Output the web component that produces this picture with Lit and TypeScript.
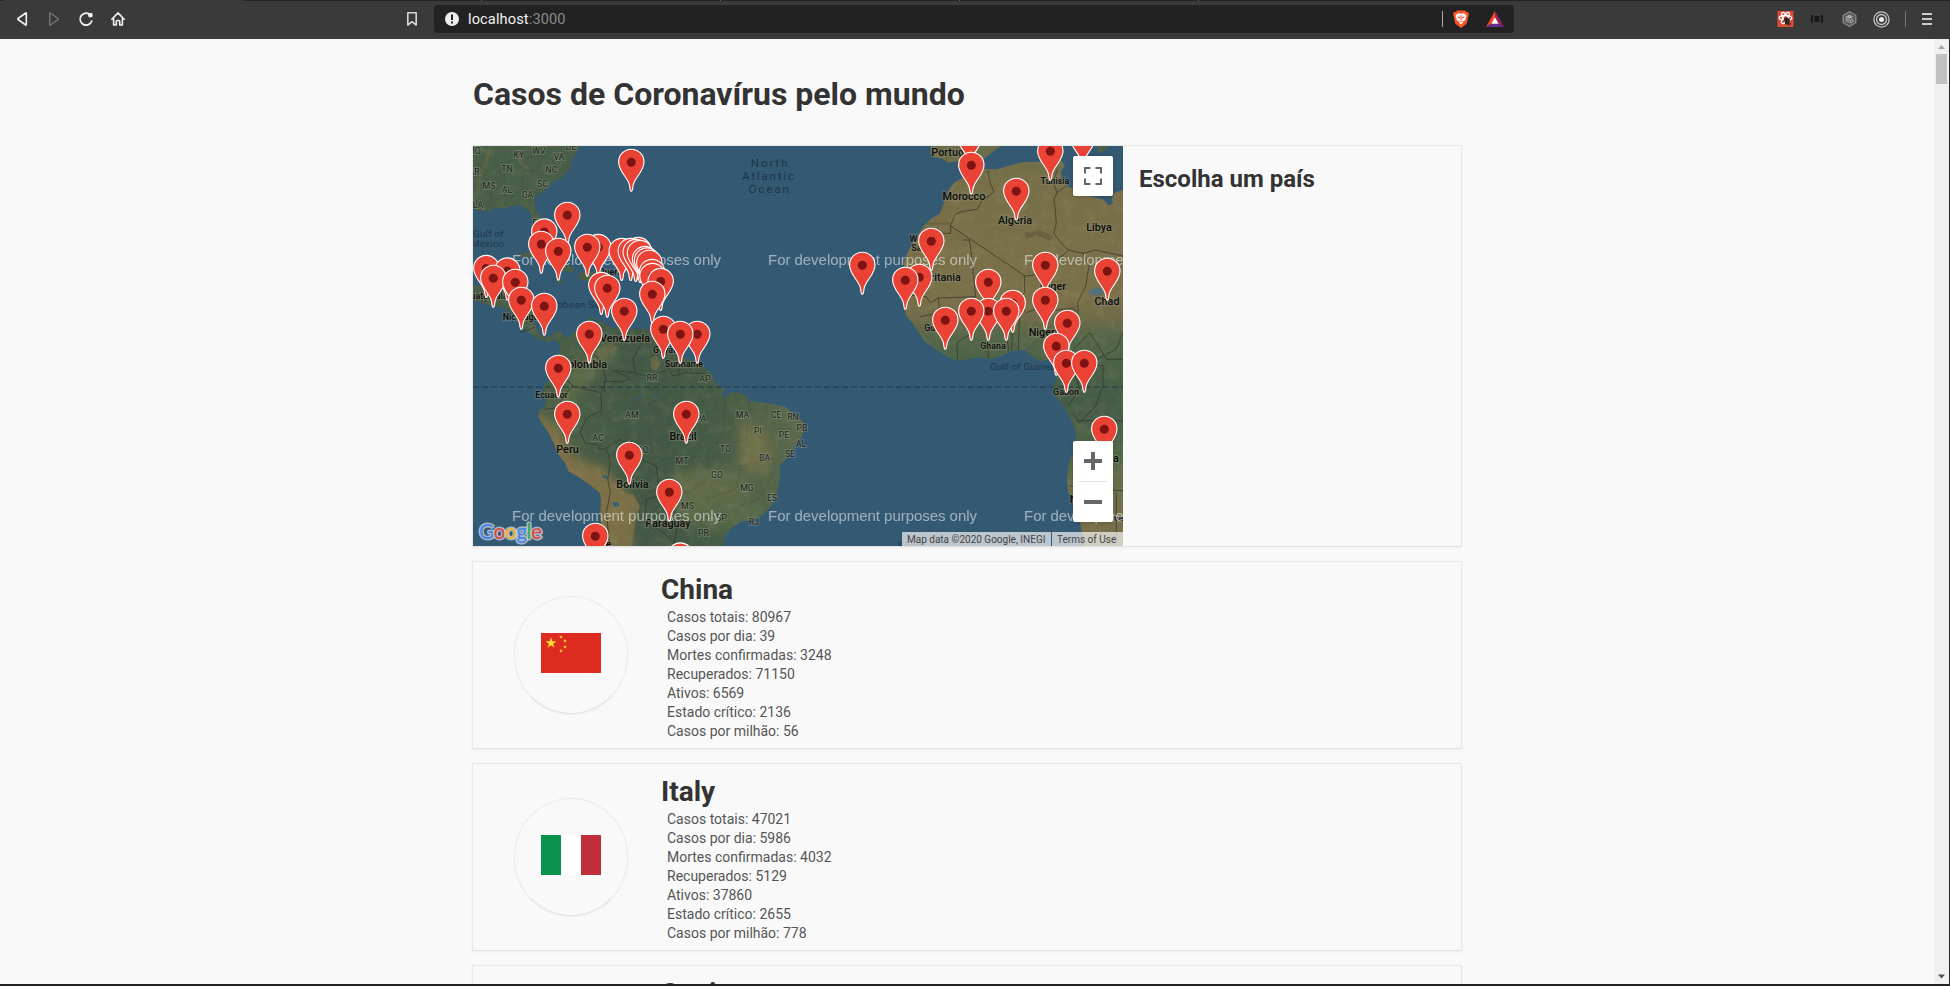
import { LitElement, html, svg, css } from "lit";
import { customElement, property } from "lit/decorators.js";

interface Country {
  name: string;
  flag: string;
  stats: [string, number][];
}

const country = (name: string, flag: string, n: number[]): Country => ({
  name,
  flag,
  stats: [
    ["Casos totais", n[0]],
    ["Casos por dia", n[1]],
    ["Mortes confirmadas", n[2]],
    ["Recuperados", n[3]],
    ["Ativos", n[4]],
    ["Estado crítico", n[5]],
    ["Casos por milhão", n[6]],
  ],
});

const COUNTRIES: Country[] = [
  country("China", "cn", [80967, 39, 3248, 71150, 6569, 2136, 56]),
  country("Italy", "it", [47021, 5986, 4032, 5129, 37860, 2655, 778]),
  country("Spain", "es", [21510, 3433, 1093, 1588, 18829, 939, 460]),
];

// Pin positions on the 650x400 map (centre of each pin's dot), back to front.
const PINS: [number, number][] = [
  [496.7, -9.3], [609.7, -8.3], [577.3, 5.3], [158.3, 16.3], [498.3, 19.3], [543.3, 45.3],
  [94.3, 69.3], [71.3, 86], [458.3, 95.3], [68.3, 98.3], [125.3, 101.5], [114.3, 101.3],
  [165.3, 104.5], [85.3, 105.3], [148.7, 105.5], [157.7, 105.5], [162.7, 106.5], [167, 107.5],
  [172, 113.5], [174, 115], [176.3, 117.3], [389.3, 119.3], [572.3, 119.3], [13.3, 122.5],
  [34.3, 125], [634.3, 125.3], [179, 126.5], [179.5, 130.5], [446.3, 131.3], [20.3, 132.3],
  [432.3, 134.3], [187.7, 135.5], [42.3, 136.3], [515.3, 136.3], [128.3, 139.5], [134.3, 142.3],
  [179.3, 148.3], [48.3, 154.3], [572.3, 154.3], [539.7, 157.3], [71.3, 160.3], [515.3, 165.3],
  [151.3, 165.3], [498.3, 165.3], [533.3, 165.3], [472.3, 174.3], [594.3, 177.3], [190.3, 183.3],
  [224.3, 188.3], [116.3, 188.3], [207.3, 188.3], [583.3, 200.3], [593.3, 217.3], [611.3, 217.3],
  [85.3, 222.3], [94.3, 268.3], [213.3, 268.3], [631.3, 283.3], [156.3, 309.3], [196.3, 346.3],
  [122.3, 390.3], [207.3, 410],
];

// Labels: text, centre x, baseline y, size.
const COUNTRY_LABELS: [string, number, number, number][] = [
  ["Portugal", 479, 10, 10.8], ["Morocco", 491, 54, 10.8], ["Tunisia", 582, 37.5, 8.9],
  ["Algeria", 542, 78, 10.8], ["Libya", 626, 85, 10.8], ["Western", 453, 95.5, 8.9],
  ["Sahara", 452, 104.5, 8.9], ["Mauritania", 462, 134.8, 10.8], ["Niger", 580, 143.8, 10.8],
  ["Chad", 634, 159, 10.8], ["Nigeria", 573, 190, 10.8], ["Guinea", 465, 184.5, 8.9],
  ["Ghana", 520, 202.5, 8.9], ["Gabon", 593, 248.5, 8.9], ["Angola", 629, 316, 10.8],
  ["Namibia", 617, 357, 10.8], ["Guatemala", 13, 152.5, 8.9], ["Nicaragua", 50, 173.5, 8.9],
  ["Puerto Rico", 149, 128.5, 8.9], ["Venezuela", 152, 196, 10.8], ["Colombia", 111, 222, 10.8],
  ["Guyana", 195, 206.5, 8.9], ["Suriname", 211, 220.5, 8.9], ["Ecuador", 78.5, 251.5, 8.9],
  ["Peru", 94.5, 306.5, 10.8], ["Brazil", 210, 293.5, 10.8], ["Bolivia", 159.5, 341.5, 10.8],
  ["Paraguay", 195, 380.5, 10.8], ["Chile", 126, 402, 10.8], ["Botswana", 640, 375, 9],
];

const STATE_LABELS: [string, number, number][] = [
  ["MO", 1, 8], ["KY", 46, 12], ["WV", 66, 7.5], ["VA", 86, 14], ["DE", 98, 4], ["AR", 1, 29],
  ["TN", 34, 26], ["NC", 78.5, 27], ["MS", 16, 43], ["AL", 34, 47], ["SC", 69.5, 41],
  ["GA", 54.5, 52], ["LA", 5, 62], ["FL", 64, 80], ["RR", 179, 235], ["AP", 232, 236],
  ["AM", 159, 272], ["PA", 228, 276], ["MA", 269.5, 272], ["CE", 303, 272], ["RN", 320, 274],
  ["PI", 285, 288], ["PB", 329, 285], ["PE", 311, 292], ["AL", 328, 301], ["SE", 317, 311],
  ["AC", 125, 295], ["RO", 170, 307], ["TO", 252.5, 306], ["BA", 291.5, 315], ["MT", 209, 318],
  ["GO", 244, 332], ["MG", 274, 345], ["ES", 299, 355], ["MS", 214.5, 363], ["SP", 248.5, 375],
  ["RJ", 281, 379], ["PR", 230.5, 390],
];

// Continent outlines, in thirds of a map pixel.
const N_AMERICA = "M0 0H318L308 22 296 44 292 66 276 82 268 96 250 104 236 112 226 126 212 134 200 142 188 150 184 164 186 180 196 200 207 222 214 246 206 262 196 258 186 236 178 226 176 208 164 190 148 186 136 176 120 182 106 180 100 190 84 186 62 186 50 198 34 194 18 196 0 186Z";
const C_AMERICA = "M0 418L36 420 60 438 96 432 130 440 160 440 178 446 184 470 180 506 186 534 196 560 214 574 232 570 250 556 268 562 280 580 284 602 266 612 256 590 240 578 230 590 218 586 198 582 180 568 160 556 146 540 128 524 116 500 90 486 60 480 24 470 0 460Z";
const S_AMERICA = "M266 600L284 572 310 556 336 528 358 512 364 520 352 536 366 536 378 524 392 528 410 544 470 548 520 548 545 560 572 590 600 622 640 640 680 652 714 680 724 706 738 720 756 730 744 744 752 754 776 738 800 740 818 750 828 766 856 768 900 774 936 782 968 806 988 824 994 846 986 872 974 892 956 916 940 938 920 960 920 1000 912 1040 902 1066 890 1086 868 1108 838 1122 806 1126 776 1146 756 1170 750 1200H388L384 1140 382 1100 384 1060 380 1040 350 1016 318 994 286 976 276 950 256 924 246 900 230 866 208 834 196 812 198 792 214 786 218 766 210 744 214 716 232 700 244 664 254 634Z";
const AFRICA = "M1506 57L1494 76 1476 92 1446 108 1424 136 1414 168 1400 204 1374 218 1354 238 1338 262 1320 290 1304 320 1292 350 1296 386 1304 420 1300 452 1294 484 1298 508 1318 530 1334 556 1356 588 1392 612 1426 634 1454 645 1486 640 1514 634 1546 640 1588 630 1612 616 1656 612 1680 634 1700 646 1726 642 1744 652 1752 684 1740 730 1754 758 1776 790 1796 826 1810 866 1804 912 1788 950 1782 1000 1784 1036 1808 1072 1820 1120 1832 1200H1950V132L1924 140 1916 160 1920 172 1908 178 1890 160 1856 152 1830 140 1806 132 1784 120 1766 100 1764 76 1776 58 1764 44 1730 42 1690 48 1650 48 1612 58 1572 70 1530 68Z";
const IBERIA = "M1374 0L1372 20 1380 34 1408 38 1426 50 1452 46 1490 46 1530 40 1556 20 1584 0Z";
const ISLANDS = "M126 330L160 318 196 316 240 334 282 356 304 368 300 378 262 376 236 352 192 334 150 334ZM250 404L272 406 274 411 256 412ZM316 384L348 374 384 378 412 390 398 398 360 398 330 404 316 398ZM424 396H446L444 404H426ZM1868 0L1880 20 1898 14 1906 0ZM290 220H294V226H290ZM1295 218H1300V222H1295ZM1312 222H1318V226H1312ZM1340 216H1345V224H1340Z";

const map = svg`
  <svg class="geo" viewBox="0 0 1950 1200" width="650" height="400">
    <defs>
      <linearGradient id="africa" x1="0" y1="0" x2="0" y2="1200" gradientUnits="userSpaceOnUse">
        <stop offset="0" stop-color="#686b48"/><stop offset=".08" stop-color="#776f49"/>
        <stop offset=".38" stop-color="#7a7049"/><stop offset=".43" stop-color="#706b49"/>
        <stop offset=".47" stop-color="#586748"/><stop offset=".54" stop-color="#4b6248"/>
        <stop offset=".64" stop-color="#455b46"/><stop offset=".77" stop-color="#526748"/>
        <stop offset=".88" stop-color="#71704b"/><stop offset="1" stop-color="#7b6e48"/>
      </linearGradient>
      <linearGradient id="america" x1="280" y1="0" x2="1000" y2="0" gradientUnits="userSpaceOnUse">
        <stop offset="0" stop-color="#4a5f46"/><stop offset=".3" stop-color="#435845"/>
        <stop offset=".62" stop-color="#465b45"/><stop offset="1" stop-color="#5d6b4b"/>
      </linearGradient>
      <clipPath id="sa"><path d=${S_AMERICA}/></clipPath>
      <clipPath id="land"><path d=${N_AMERICA + C_AMERICA + S_AMERICA + AFRICA + IBERIA + ISLANDS}/></clipPath>
      <filter id="soft" x="-20%" y="-20%" width="140%" height="140%"><feGaussianBlur stdDeviation="14"/></filter>
      <filter id="terrain" x="0" y="0" width="100%" height="100%">
        <feTurbulence type="fractalNoise" baseFrequency=".03" numOctaves="4" seed="8"/>
        <feColorMatrix values="0 0 0 0 .52  0 0 0 0 .47  0 0 0 0 .28  2 0 0 0 -.9"/>
      </filter>
    </defs>
    <rect width="1950" height="1200" fill="#345973"/>
    <path d=${N_AMERICA + C_AMERICA + ISLANDS} fill="#495e47"/>
    <path d=${S_AMERICA} fill="url(#america)"/>
    <path d=${AFRICA + IBERIA} fill="url(#africa)"/>
    <g clip-path="url(#sa)">
      <g filter="url(#soft)">
        <path d="M190 790L262 850 300 930 400 970 440 1020 480 1060 470 1200H360L370 1060 270 990 190 830Z" fill="#7d7046"/>
        <path d="M290 690L330 640 400 600 440 620 380 670 320 740 270 800 250 780Z" fill="#5b6a49"/>
        <path d="M600 980L760 960 840 1000 800 1100 640 1140 600 1080Z" fill="#5f6b49"/>
        <path d="M800 820L880 850 900 940 860 990 800 960Z" fill="#70704a"/>
        <path d="M680 1080L860 1060 850 1130 700 1160Z" fill="#566a4a"/>
      </g>
      <path d="M384 1020L420 1010 460 1042 482 1046 500 1080 486 1130 476 1200H388Z" fill="#7d7046" opacity=".8"/>
      <path d="M368 610L420 590 432 610 380 640ZM530 640L548 628 562 650 552 676 536 670Z" fill="#6c6c47" opacity=".7"/>
      <path d="M418 1070L436 1068 440 1080 424 1084ZM386 986L404 990 402 998 390 996ZM520 754L560 744 562 748ZM470 764L510 748 512 752Z" fill="#34607a"/>
    </g>
    <g clip-path="url(#land)"><rect width="1950" height="1200" filter="url(#terrain)" opacity=".14"/></g>
    <path d="M0 0L46 20 36 60 20 90 14 140M130 20L150 60 170 70" fill="none" stroke="#7b7044" stroke-width="12" opacity=".3"/>
    <path d="M1655 260L1700 252 1740 270 1730 284 1690 268 1660 278ZM1360 230H1430V236H1362Z" fill="#5b573d" opacity=".55"/>
    <path d="M1842 440L1866 424 1896 430 1888 446 1860 448Z" fill="#54707a"/>
    <g class="border">
      <path d="M1544 74L1552 112 1562 136 1548 150 1530 160 1512 190 1470 196 1448 204 1433 236V262H1370M1433 240L1636 376 1656 390 1696 386 1746 350 1786 312 1764 290 1742 262 1750 232 1746 180 1742 162 1752 140 1742 110 1752 72M1752 140L1780 120M1786 312L1830 322 1866 312 1950 330M1830 322L1848 360 1838 420 1814 470 1816 500 1800 486 1740 494 1700 486 1660 500 1640 480M1468 282H1490L1508 452 1396 456 1372 470 1360 452 1300 446M1655 390V440L1636 460 1574 470 1540 490 1510 500 1490 520 1500 560 1452 590 1454 640M1396 456L1400 500 1340 512M1546 520V636M1600 500L1606 616M1620 490L1616 612M1640 480L1636 612M1756 660L1812 600 1850 560 1870 590 1900 640 1950 640M1740 668H1800L1820 730 1786 780M1800 660L1890 658 1890 720 1868 780 1820 830 1800 800M1810 824H1950M1790 1020L1860 1030 1950 1034M1930 1040V1200M1870 640L1930 610 1950 560M1500 452L1504 504"/>
      <path d="M318 560L332 600 380 640 400 700 384 740M214 790L250 786 280 740 300 720 384 740M300 720L280 700 246 680M384 740L386 794 340 816 322 860 336 890 376 898 380 910 400 906 412 950 404 1000 412 1040 400 1100 410 1200M400 906L440 880 480 900 500 940 550 960 554 1000 556 1046M420 674L460 690 470 700 450 706 394 706 394 740M426 674L480 680 520 690 580 674M520 570L500 600 480 640 486 680M570 590L580 660 600 690 640 680 700 684M620 630L616 680M650 650L656 686M520 1060L560 1050 590 1080 620 1120 600 1200M520 1060L516 1120 596 1180M110 440L116 480M24 434L40 470M100 500L170 506M140 560L186 544"/>
      <path class="fine" d="M0 90L160 74 270 76M0 44L40 76 120 40 200 30 290 60M60 88L50 180M96 84L100 184M144 80L156 156 184 156M150 150H112M184 156L212 130M150 84L212 132M556 700L560 760 480 790M640 690L690 760 680 860 560 900M760 740L750 860 700 930 560 940M830 770L820 880 750 900M880 780L880 850 820 880M900 850H980M930 880L900 940 800 960M700 930L720 990 640 1040 580 1040M800 960L790 1030 700 1060M900 980L860 1060 800 1080M640 1130L720 1110 780 1130"/>
    </g>
    <path d="M0 723H1950" stroke="#2b3b45" stroke-width="4.5" stroke-dasharray="18 9" opacity=".75"/>
  </svg>`;

const pin = ([x, y]: [number, number]) => svg`
  <g transform="translate(${x} ${y})">
    <path d="M0 29C-1.4 29-1.3 25.5-1.9 22.5C-3.6 15-12.7 9-12.7-.4A12.7 12.7 0 0 1 12.7-.4C12.7 9 3.6 15 1.9 22.5C1.3 25.5 1.4 29 0 29Z" fill="#ea4335" stroke="#fff" stroke-width="1.1"/>
    <circle r="4.5" fill="#7e1411"/>
  </g>`;

@customElement("case-map")
class CaseMap extends LitElement {
  static styles = css`
    :host { display: block; position: relative; width: 650px; height: 400px; overflow: hidden; font-family: Roboto, sans-serif; }
    svg { display: block; }
    .layer, .controls, .legal { position: absolute; }
    .layer { left: 0; top: 0; }
    .border path { fill: none; stroke: #34382e; stroke-width: 3; opacity: .75; stroke-linejoin: round; }
    .border .fine { stroke-width: 2; stroke-dasharray: 6 4; opacity: .45; }
    .country { font-weight: 500; fill: #0b0d0b; text-anchor: middle; paint-order: stroke; stroke: rgba(150, 150, 130, .34); stroke-width: 2.4px; }
    .state { font-size: 8.8px; fill: #1c231d; text-anchor: middle; paint-order: stroke; stroke: rgba(150, 160, 140, .42); stroke-width: 2px; }
    .ocean { font-size: 11.8px; letter-spacing: 1.7px; fill: #1f3546; text-anchor: middle; }
    .sea { font-size: 9.9px; fill: #1f384b; letter-spacing: .2px; }
    .mark { font-family: "Liberation Sans", sans-serif; font-size: 15px; fill: #fff; opacity: .52; }
    .logo { font-family: Lato, sans-serif; font-weight: 500; font-size: 21px; paint-order: stroke; stroke: rgba(205, 216, 226, .75); stroke-width: 3px; stroke-linejoin: round; }
    .controls { right: 10px; top: 10px; height: 366px; display: flex; flex-direction: column; justify-content: space-between; }
    .button { width: 40px; background: #fff; border-radius: 2px; box-shadow: 0 1px 4px -1px rgba(0, 0, 0, .3); }
    .legal { right: 0; bottom: 0; height: 14px; display: flex; gap: 1px; font-size: 10px; line-height: 15px; color: #444; white-space: nowrap; }
    .legal span { background: rgba(245, 245, 245, .7); padding: 0 5.5px; }
    .legal .data { width: 138px; }
    .legal .terms { width: 60.5px; }
  `;
  render() {
    return html`
      ${map}
      <svg class="layer" viewBox="0 0 650 400" width="650" height="400">
        <text class="ocean" x="297" y="21">North</text>
        <text class="ocean" x="295.800" y="34">Atlantic</text>
        <text class="ocean" x="296.500" y="47">Ocean</text>
        <text class="sea" x="0" y="90.500">Gulf of</text>
        <text class="sea" x="-2" y="100.500">Mexico</text>
        <text class="sea" x="66" y="161.500">Caribbean Sea</text>
        <text class="sea" x="517" y="223.500">Gulf of Guinea</text>
        <text class="sea" x="425" y="403">South</text>
        ${STATE_LABELS.map(([t, x, y]) => svg`<text class="state" x=${x} y=${y}>${t}</text>`)}
        ${COUNTRY_LABELS.map(([t, x, y, s]) => svg`<text class="country" x=${x} y=${y} font-size=${s}>${t}</text>`)}
        ${[118.5, 374.5].map((y) => [39, 295, 551].map((x) => svg`
          <text class="mark" x=${x} y=${y} textLength="209">For development purposes only</text>`))}
        ${PINS.map(pin)}
        <text class="logo" x="6" y="392.500" textLength="63"><tspan fill="#4a86e8">G</tspan><tspan fill="#e2483d">o</tspan><tspan fill="#f0b429">o</tspan><tspan fill="#4a86e8">g</tspan><tspan fill="#3ca55c">l</tspan><tspan fill="#e2483d">e</tspan></text>
      </svg>
      <div class="controls">
        <div class="button">
          <svg viewBox="0 0 40 40" width="40" height="40"><path d="M12 17.500V12h5.500M22.500 12H28v5.500M28 22.500V28h-5.500M17.500 28H12v-5.500" fill="none" stroke="#666" stroke-width="2"/></svg>
        </div>
        <div class="button">
          <svg viewBox="0 0 40 81" width="40" height="81"><path d="M11 20h18M20 11v18M11 61h18" stroke="#666" stroke-width="4"/><path d="M5 40.500h30" stroke="#e6e6e6"/></svg>
        </div>
      </div>
      <div class="legal"><span class="data">Map data ©2020 Google, INEGI</span><span class="terms">Terms of Use</span></div>
    `;
  }
}

const star = (cx: number, cy: number, r: number) => {
  const pts = Array.from({ length: 10 }, (_, i) => {
    const a = (Math.PI / 5) * i - Math.PI / 2;
    const d = i % 2 ? r * 0.39 : r;
    return `${(cx + Math.cos(a) * d).toFixed(2)},${(cy + Math.sin(a) * d).toFixed(2)}`;
  });
  return svg`<polygon points=${pts.join(" ")} fill="#ffde31"/>`;
};

const FLAGS: Record<string, unknown> = {
  cn: svg`<rect width="60" height="40" fill="#de2b1f"/>${star(10, 10, 5.8)}${star(20, 4, 2)}${star(24, 8, 2)}${star(24, 14, 2)}${star(20, 18, 2)}`,
  it: svg`<rect width="60" height="40" fill="#fff"/><rect width="20" height="40" fill="#0b924c"/><rect x="40" width="20" height="40" fill="#c12f3b"/>`,
  es: svg`<rect width="60" height="40" fill="#c60b1e"/><rect y="10" width="60" height="20" fill="#ffc400"/>`,
};

@customElement("country-card")
class CountryCard extends LitElement {
  @property({ attribute: false }) country!: Country;
  static styles = css`
    :host { display: flex; box-sizing: border-box; height: 188px; flex: none; padding: 11px 0 0 41px; border: 1px solid #e8e8e8; border-bottom-color: #e2e2e2; box-shadow: 0 1px 3px rgba(0, 0, 0, .05); }
    .badge { box-sizing: border-box; width: 114px; height: 118px; margin-top: 23px; padding: 36px 26px 0; border: 1px solid #ebebeb; border-bottom-color: #e2e2e2; border-radius: 50%; box-shadow: 0 1px 2px rgba(0, 0, 0, .05); }
    .badge svg { display: block; }
    .info { margin-left: 33px; }
    h2 { margin: 0 0 2px; font-size: 28px; line-height: 33px; color: #333; }
    ul { list-style: none; margin: 0; padding: 0 0 0 6px; font-size: 14px; line-height: 19px; color: #555; }
  `;
  render() {
    const c = this.country;
    return html`
      <div class="badge"><svg viewBox="0 0 60 40" width="60" height="40">${FLAGS[c.flag]}</svg></div>
      <div class="info">
        <h2>${c.name}</h2>
        <ul>${c.stats.map(([k, v]) => html`<li>${k}: ${v}</li>`)}</ul>
      </div>
    `;
  }
}

@customElement("browser-bar")
class BrowserBar extends LitElement {
  static styles = css`
    :host { display: flex; flex-direction: column; height: 39px; background: #3a3a3a; box-sizing: border-box; }
    .tabs { display: flex; height: 1px; background: #232323; }
    .tab { width: 239px; margin-left: 4px; background: #3a3a3a; }
    .cut { width: 1px; margin-left: 238px; background: #666; }
    .row { display: flex; align-items: center; height: 36px; }
    svg { display: block; flex: none; }
    .nav { display: flex; gap: 16px; margin-left: 14px; width: 389px; }
    .url { display: flex; align-items: center; box-sizing: border-box; width: 1080px; height: 28px; margin-left: 13px; padding: 0 10px 0 11px; border-radius: 4px; background: #222; font: 14.6px/28px Roboto, sans-serif; letter-spacing: .12px; color: #f2f2f2; }
    .url .text { flex: 1; margin-left: 9px; }
    .port { color: #8b8b8b; }
    .rule { width: 1px; height: 16px; background: #aaa; }
    .url .rule { margin-right: 10px; }
    .url .rewards { margin-left: 17px; }
    .ext { display: flex; align-items: center; gap: 14px; margin-left: 263px; }
    .ext .rule { margin: 0 1px; background: #777; }
  `;
  render() {
    return html`
      <div class="tabs"><div class="tab"></div>${[0, 1, 2, 3].map(() => html`<div class="cut"></div>`)}</div>
      <div class="row">
        <div class="nav">
          <svg width="16" height="16" viewBox="0 0 16 16" fill="none" stroke="#f0f0f0" stroke-width="1.6" stroke-linejoin="round"><path d="M12.300 2.200v11.600Q12.300 14.300 11.700 14L4 8.500Q3.500 8 4 7.500L11.700 2Q12.300 1.700 12.300 2.200Z"/></svg>
          <svg width="16" height="16" viewBox="0 0 16 16" fill="none" stroke="#757575" stroke-width="1.5" stroke-linejoin="round"><path d="M3.700 2.200v11.600Q3.700 14.300 4.300 14L12 8.500Q12.500 8 12 7.500L4.300 2Q3.700 1.700 3.700 2.200Z"/></svg>
          <svg width="16" height="16" viewBox="0 0 16 16" fill="none" stroke="#f0f0f0" stroke-width="1.7" stroke-linecap="round"><path d="M13.800 10A6 6 0 1 1 11.500 3.200"/><path d="M9.700 2.300H14.400V6.600Z" fill="#f0f0f0" stroke="none"/><circle cx="12.200" cy="4.200" r="2.200" fill="#f0f0f0" stroke="none"/></svg>
          <svg width="16" height="16" viewBox="0 0 16 16" fill="none" stroke="#f0f0f0" stroke-width="1.6" stroke-linejoin="round" stroke-linecap="round"><path d="M1.800 8.200L8 1.900 14.200 8.200M3.600 7.300V14H6.300V10.300Q6.300 9.500 7 9.500H9Q9.700 9.500 9.700 10.300V14H12.400V7.300"/></svg>
        </div>
        <svg width="18" height="16" viewBox="0 0 18 16" fill="none" stroke="#d8d8d8" stroke-width="1.6" stroke-linejoin="round"><path d="M4.800 1.800H13.200V14L9 10.700 4.800 14Z"/></svg>
        <div class="url">
          <svg width="14" height="14" viewBox="0 0 14 14"><circle cx="7" cy="7" r="7" fill="#eee"/><path d="M7 2.600V8M7 9.600V11.400" stroke="#222" stroke-width="2"/></svg>
          <span class="text">localhost<span class="port">:3000</span></span>
          <div class="rule"></div>
          <svg width="16" height="18" viewBox="0 0 16 18"><path d="M4 .4H12L13.400 2 15 1.900 16 4.300 15.300 6 14 12.500Q13.600 14 12 15L8 17.900 4 15Q2.400 14 2 12.500L.7 6 0 4.300 1 1.900 2.600 2Z" fill="#fb542b"/><path d="M5.400 3.300 8 3.800 10.600 3.300 12 4 13.700 6 12.400 8.300 12.600 9.800 10 11.600 9.800 12.500 8 14.700 6.200 12.500 6 11.600 3.400 9.800 3.600 8.300 2.300 6 4 4Z" fill="#fff"/><path d="M4.400 6.300 7 7 6.800 8.600 5.500 8.200ZM11.600 6.300 9 7 9.200 8.600 10.500 8.200ZM7.500 5H8.500V10H7.500ZM5.800 10.300 8 11.300 10.200 10.300 8 12.400Z" fill="#fb542b"/></svg>
          <svg class="rewards" width="18" height="16" viewBox="0 0 18 16"><path d="M9 0 0 16 5.600 12.600 9 6.700Z" fill="#ff4724"/><path d="M9 0 18 16 12.400 12.600 9 6.700Z" fill="#9e1f63"/><path d="M0 16H18L12.400 12.600H5.600Z" fill="#662d91"/><path d="M9 6.200 12.600 12.700H5.400Z" fill="#fff"/></svg>
        </div>
        <div class="ext">
          <svg width="17" height="16" viewBox="0 0 17 16"><rect x=".5" width="16" height="16" fill="#dd4b39"/><g fill="none" stroke="#fff" stroke-width="1.300"><ellipse cx="8.500" cy="7" rx="6.300" ry="2.500"/><ellipse cx="8.500" cy="7" rx="6.300" ry="2.500" transform="rotate(60 8.500 7)"/><ellipse cx="8.500" cy="7" rx="6.300" ry="2.500" transform="rotate(120 8.500 7)"/></g><path d="M7 7 11 6.500 13 9 12.600 13.500 9 13.800 7.500 11Z" fill="#33221f"/><path d="M6 10 9 8M8 13 12 9M11 14.500 14 12.500" stroke="#33221f"/></svg>
          <svg width="18" height="16" viewBox="0 0 18 16" fill="none" stroke="#0c0c0c" stroke-width="1.400"><path d="M5.200 4.700H4.700Q4 4.700 4 5.700V7Q4 8 3 8 4 8 4 9V10.300Q4 11.300 4.700 11.300H5.200M12.800 4.700H13.300Q14 4.700 14 5.700V7Q14 8 15 8 14 8 14 9V10.300Q14 11.300 13.300 11.300H12.800M6.600 6H11.400M6.600 8H11.400M6.600 10H11.400"/></svg>
          <svg width="18" height="16" viewBox="0 0 18 16"><path d="M9.500 .7 15.800 4.300V11.700L9.500 15.300 3.200 11.700V4.300Z" fill="#555" stroke="#8c8c8c" stroke-width="1.300"/><path d="M9.500 3.400 13.500 5.700 9.500 8 5.500 5.700Z" fill="#aaa"/><path d="M5.500 5.700 9.500 8V12.600L5.500 10.300Z" fill="#8f8f8f"/><path d="M13.300 7.700 10.500 9V12L13.300 10.500V9.400H11.900" fill="none" stroke="#aaa"/></svg>
          <svg width="18" height="17" viewBox="0 0 18 17" fill="none" stroke="#c4c4c4" stroke-width="1.300"><circle cx="9.500" cy="8.500" r="7.600"/><circle cx="9.500" cy="8.500" r="5"/><circle cx="9.500" cy="8.500" r="2.500" fill="#eee" stroke="none"/></svg>
          <div class="rule"></div>
          <svg width="14" height="16" viewBox="0 0 14 16"><path d="M1 3H11M1 8H11M1 13H11" stroke="#ccc" stroke-width="2"/></svg>
        </div>
      </div>
    `;
  }
}

@customElement("app-root")
class AppRoot extends LitElement {
  static styles = css`
    :host { display: flex; flex-direction: column; box-sizing: border-box; width: 1950px; height: 986px; overflow: hidden; border-bottom: 2px solid #222; background: #f9f9f9; font-family: Roboto, sans-serif; color: #333; }
    .view { display: flex; flex: 1; min-height: 0; border-right: 1px solid #222; }
    .page { display: flex; justify-content: center; flex: 1; overflow: hidden; }
    main { display: flex; flex-direction: column; gap: 14px; width: 990px; }
    h1 { flex: none; margin: 36px 0 18px; padding-left: 1px; font-size: 32px; line-height: 38px; }
    .panel { display: flex; flex: none; box-sizing: border-box; height: 402px; border: 1px solid #e8e8e8; border-bottom-color: #e2e2e2; box-shadow: 0 1px 3px rgba(0, 0, 0, .05); }
    .panel h3 { margin: 19px 0 0 16px; font-size: 24px; line-height: 29px; }
    .scroll { display: flex; flex-direction: column; align-items: center; width: 15px; background: #f0f0f0; }
    .thumb { width: 11px; height: 30px; margin-bottom: auto; background: #c1c1c1; }
    .scroll svg { display: block; }
  `;
  render() {
    return html`
      <browser-bar></browser-bar>
      <div class="view">
        <div class="page">
          <main>
            <h1>Casos de Coronavírus pelo mundo</h1>
            <section class="panel">
              <case-map></case-map>
              <h3>Escolha um país</h3>
            </section>
            ${COUNTRIES.map((c) => html`<country-card .country=${c}></country-card>`)}
          </main>
        </div>
        <div class="scroll">
          <svg width="15" height="15" viewBox="0 0 15 15"><path d="M4 10 7.500 6 11 10Z" fill="#a3a3a3"/></svg>
          <div class="thumb"></div>
          <svg width="15" height="15" viewBox="0 0 15 15"><path d="M4 5.500 7.500 9.500 11 5.500Z" fill="#505050"/></svg>
        </div>
      </div>
    `;
  }
}
